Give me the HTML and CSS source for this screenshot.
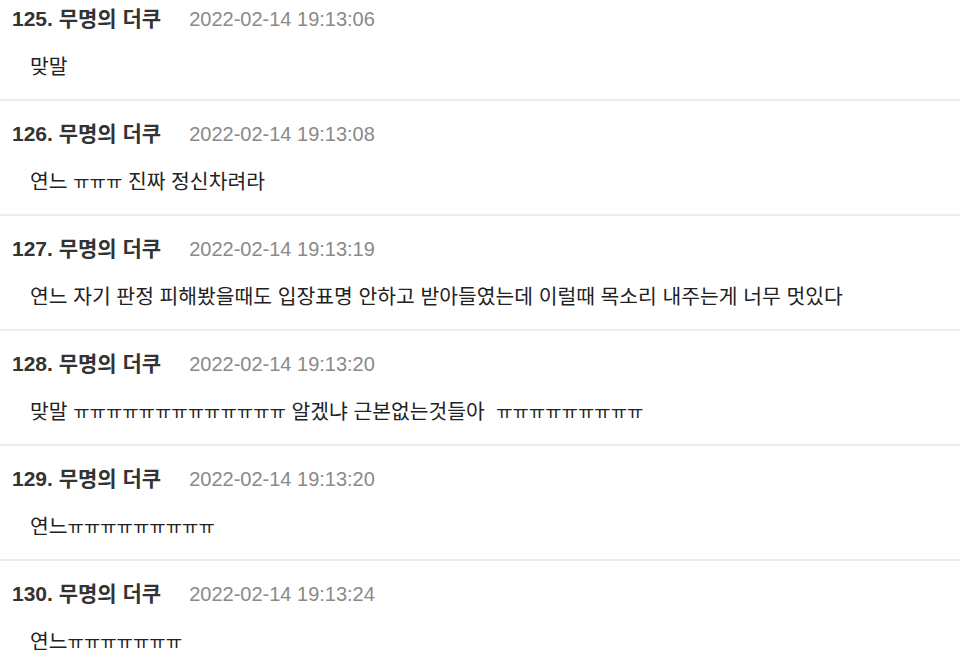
FILE: index.html
```html
<!DOCTYPE html>
<html lang="ko">
<head>
<meta charset="utf-8">
<link rel="stylesheet" href="styles.css">
</head>
<body>
<div class="list">
  <div class="item">
    <div class="head"><span class="name">125. 무명의 더쿠</span><span class="date">2022-02-14 19:13:06</span></div>
    <div class="body">맞말</div>
  </div>
  <div class="item">
    <div class="head"><span class="name">126. 무명의 더쿠</span><span class="date">2022-02-14 19:13:08</span></div>
    <div class="body">연느 <span class="cry">ㅠㅠㅠ</span> 진짜 정신차려라</div>
  </div>
  <div class="item">
    <div class="head"><span class="name">127. 무명의 더쿠</span><span class="date">2022-02-14 19:13:19</span></div>
    <div class="body">연느 자기 판정 피해봤을때도 입장표명 안하고 받아들였는데 이럴때 목소리 내주는게 너무 멋있다</div>
  </div>
  <div class="item">
    <div class="head"><span class="name">128. 무명의 더쿠</span><span class="date">2022-02-14 19:13:20</span></div>
    <div class="body">맞말 <span class="cry">ㅠㅠㅠㅠㅠㅠㅠㅠㅠㅠㅠㅠㅠ</span> 알겠냐 근본없는것들아 &nbsp;<span class="cry">ㅠㅠㅠㅠㅠㅠㅠㅠㅠ</span></div>
  </div>
  <div class="item">
    <div class="head"><span class="name">129. 무명의 더쿠</span><span class="date">2022-02-14 19:13:20</span></div>
    <div class="body">연느<span class="cry">ㅠㅠㅠㅠㅠㅠㅠㅠㅠ</span></div>
  </div>
  <div class="item">
    <div class="head"><span class="name">130. 무명의 더쿠</span><span class="date">2022-02-14 19:13:24</span></div>
    <div class="body">연느<span class="cry">ㅠㅠㅠㅠㅠㅠㅠ</span></div>
  </div>
</div>
</body>
</html>
```

FILE: styles.css
```css
html, body {
  margin: 0;
  padding: 0;
  background: #ffffff;
}
body {
  font-family: "Liberation Sans", "Noto Sans CJK KR", sans-serif;
  color: #222222;
  overflow: hidden;
}
.list {
  margin-top: -14px;
}
.item {
  padding: 20px 12px 19px 12px;
  border-bottom: 2px solid #ececec;
}
.head {
  display: flex;
  align-items: center;
  height: 26px;
  line-height: 26px;
}
.name {
  font-size: 21px;
  font-weight: bold;
  color: #333333;
}
.date {
  margin-left: 28px;
  font-size: 20px;
  color: #8a8a8a;
}
.body {
  margin-top: 22px;
  padding-left: 18px;
  height: 26px;
  line-height: 26px;
  font-size: 20.4px;
  color: #222222;
}
.cry {
  font-size: 17.8px;
}
```
